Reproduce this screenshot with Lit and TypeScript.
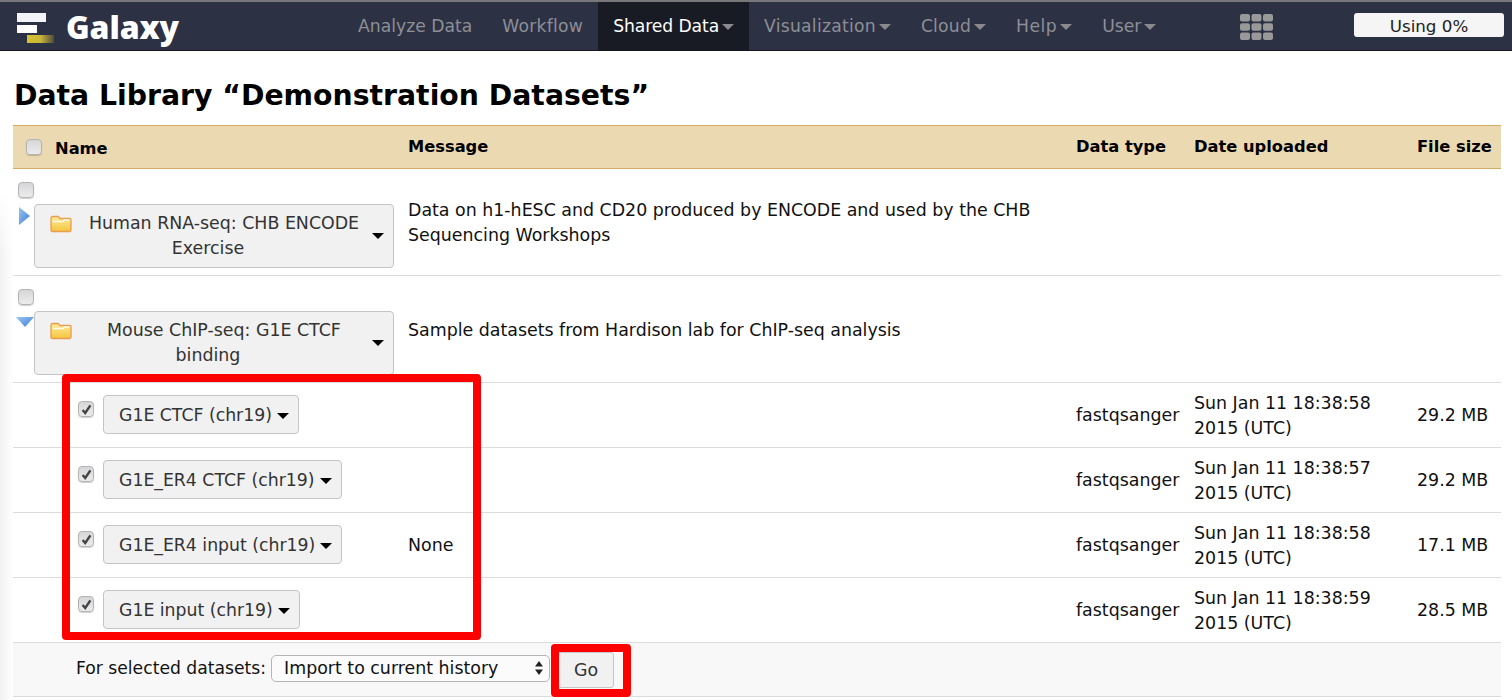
import { LitElement, html, css, svg } from "lit";
import { customElement } from "lit/decorators.js";

type Dataset = {
  name: string;
  message: string;
  time: string;
  size: string;
};

type NavItem = {
  label: string;
  caret: boolean;
  active?: boolean;
  spacing: number;
};

// spacing evens out the width difference against the original UI font
const NAV_ITEMS: NavItem[] = [
  { label: "Analyze Data", caret: false, spacing: 0 },
  { label: "Workflow", caret: false, spacing: 0.25 },
  { label: "Shared Data", caret: true, active: true, spacing: -0.1 },
  { label: "Visualization", caret: true, spacing: 0.25 },
  { label: "Cloud", caret: true, spacing: 0.2 },
  { label: "Help", caret: true, spacing: 0.5 },
  { label: "User", caret: true, spacing: 0 },
];

const DATASETS: Dataset[] = [
  { name: "G1E CTCF (chr19)", message: "", time: "Sun Jan 11 18:38:58", size: "29.2 MB" },
  { name: "G1E_ER4 CTCF (chr19)", message: "", time: "Sun Jan 11 18:38:57", size: "29.2 MB" },
  { name: "G1E_ER4 input (chr19)", message: "None", time: "Sun Jan 11 18:38:58", size: "17.1 MB" },
  { name: "G1E input (chr19)", message: "", time: "Sun Jan 11 18:38:59", size: "28.5 MB" },
];

const folderIcon = svg`<svg class="folder" width="22" height="18" viewBox="0 0 22 18">
  <defs><linearGradient id="fg" x1="0" y1="0" x2="0" y2="1"><stop offset="0" stop-color="#fdeb9c"/><stop offset="1" stop-color="#f5c53e"/></linearGradient></defs>
  <path d="M1 3.500Q1 1.500 3 1.500H8L10 3.500H19.500Q21 3.500 21 5V15Q21 16.500 19.500 16.500H2.500Q1 16.500 1 15Z" fill="url(#fg)" stroke="#e99d50" stroke-width="1.300"/>
  <path d="M2.500 6.500H13L14.500 5H19.500" fill="none" stroke="#fffbe8" stroke-width="1.300"/>
</svg>`;

@customElement("app-root")
export class AppRoot extends LitElement {
  static styles = css`
    :host {
      display: block;
      position: relative;
      width: 1512px;
      height: 700px;
      overflow: hidden;
      background: #fff;
      font-family: "DejaVu Sans", Verdana, sans-serif;
      font-size: 17.4px;
      color: #111;
    }
    .nav {
      height: 48px;
      border-top: 2px solid #77777a;
      border-bottom: 1px solid #14161f;
      background: #2c3143;
      display: flex;
      align-items: stretch;
    }
    .brand {
      width: 343px;
      display: flex;
      align-items: center;
      gap: 11px;
      padding-left: 17px;
      box-sizing: border-box;
    }
    .brand svg {
      margin-top: 4px;
    }
    .brand-text {
      color: #fff;
      font-family: "Open Sans", "DejaVu Sans", sans-serif;
      font-weight: 800;
      font-size: 32px;
      letter-spacing: -0.1px;
    }
    .menu {
      display: flex;
      align-items: stretch;
    }
    .menu-item {
      display: flex;
      align-items: center;
      gap: 3px;
      padding: 0 15px;
      color: #8d8f97;
      font-size: 17.2px;
    }
    .menu-item.active {
      background: #181b24;
      color: #fff;
    }
    .caret-nav {
      width: 0;
      height: 0;
      border-left: 6px solid transparent;
      border-right: 6px solid transparent;
      border-top: 6px solid #8a8a8e;
      margin-top: 2px;
    }
    .grid-icon {
      margin-left: 69px;
      margin-top: 12px;
    }
    .quota {
      position: absolute;
      left: 1354px;
      top: 13px;
      width: 150px;
      height: 24px;
      border-radius: 3px;
      background: #f5f5f5;
      color: #222;
      font-size: 16.7px;
      line-height: 26px;
      text-align: center;
    }
    .edge {
      position: absolute;
      left: 0;
      top: 190px;
      bottom: 0;
      width: 13px;
      background: linear-gradient(to right, #f1f1f1, #ffffff);
      -webkit-mask-image: linear-gradient(transparent, #000 70px);
      mask-image: linear-gradient(transparent, #000 70px);
    }
    h1 {
      margin: 0;
      padding: 24px 0 0 14px;
      height: 50px;
      font-size: 28.3px;
      line-height: 41px;
      font-weight: 700;
      color: #000;
      white-space: nowrap;
    }
    .table {
      position: relative;
      margin: 0 11px 0 13px;
    }
    .row {
      display: grid;
      grid-template-columns: 387px 668px 118px 223px 92px;
      border-bottom: 1px solid #dcdcdc;
      box-sizing: border-box;
    }
    .row > div {
      padding: 0 8px;
      min-width: 0;
      white-space: nowrap;
    }
    .head {
      height: 44px;
      background: #ebd9b2;
      border-top: 1px solid #d8ad63;
      border-bottom: 1px solid #d8ad63;
      font-weight: 700;
      align-items: center;
      color: #000;
      font-size: 16.3px;
      line-height: 24px;
    }
    .head .name-cell {
      display: flex;
      align-items: center;
      gap: 13px;
      padding-left: 13px;
    }
    .head .name-text {
      margin-top: 3px;
    }
    .check {
      width: 16px;
      height: 16px;
      box-sizing: border-box;
      border-radius: 4px;
      background: linear-gradient(#d6d6d8, #ececed);
      border: 1px solid #b3b3b3;
      box-shadow: 0 1px 1px rgba(0, 0, 0, 0.18);
      display: flex;
      align-items: center;
      justify-content: center;
      flex: none;
    }
    .folder-row {
      height: 107px;
    }
    .folder-row .msg {
      padding-top: 29px;
      line-height: 25px;
      white-space: normal;
    }
    .folder-row.r2 .msg {
      padding-top: 42px;
    }
    .folder-cell {
      padding: 13px 0 0 5px !important;
      position: relative;
    }
    .triangle {
      position: absolute;
      left: 3px;
      top: 38px;
    }
    .folder-btn {
      margin: 6px 0 0 16px;
      width: 360px;
      height: 64px;
      box-sizing: border-box;
      display: flex;
      align-items: center;
      padding-left: 15px;
      border: 1px solid #c4c4c4;
      border-radius: 4px;
      background: #f1f1f1;
      color: #333;
      line-height: 25px;
    }
    .folder-btn .folder {
      float: left;
      margin: 4px 10px 0 0;
    }
    .folder-btn .label {
      width: 316px;
      flex: none;
      text-align: center;
      white-space: nowrap;
    }
    .caret {
      width: 0;
      height: 0;
      border-left: 6px solid transparent;
      border-right: 6px solid transparent;
      border-top: 6px solid #000;
      flex: none;
    }
    .folder-btn .caret {
      margin-left: 6px;
    }
    .data-row {
      height: 65px;
      align-items: center;
      line-height: 25px;
    }
    .data-name {
      display: flex;
      align-items: flex-start;
      align-self: start;
      gap: 9px;
      padding: 12px 0 0 65px !important;
    }
    .data-name .check {
      margin-top: 6px;
    }
    .data-btn {
      height: 39px;
      box-sizing: border-box;
      display: flex;
      align-items: center;
      gap: 5px;
      padding: 2px 9px 0 15px;
      border: 1px solid #c4c4c4;
      border-radius: 4px;
      background: #f1f1f1;
      color: #333;
      font-size: 17.3px;
    }
    .date-cell {
      padding-top: 2px !important;
    }
    .footer {
      height: 54px;
      box-sizing: border-box;
      background: #f8f8f8;
      border-bottom: 1px solid #dcdcdc;
      display: flex;
      align-items: center;
      padding-left: 63px;
      gap: 5px;
    }
    .footer-label {
      margin-top: -3px;
      font-size: 17.2px;
    }
    .select {
      width: 279px;
      height: 27px;
      box-sizing: border-box;
      border: 1px solid #b5b5b5;
      border-radius: 5px;
      background: #fbfbfb;
      display: flex;
      align-items: center;
      justify-content: space-between;
      padding: 0 5px 0 12px;
      margin-top: -3px;
    }
    .go {
      width: 56px;
      height: 36px;
      box-sizing: border-box;
      border: 1px solid #c8c8c8;
      border-radius: 3px;
      background: #f1f1f1;
      color: #333;
      display: flex;
      align-items: center;
      justify-content: center;
      margin-left: 3px;
    }
    .mark {
      position: absolute;
      border: 8px solid #fd0000;
      border-radius: 4px;
      box-sizing: border-box;
      pointer-events: none;
    }
    .mark.rows {
      left: 62px;
      top: 374px;
      width: 419px;
      height: 266px;
    }
    .mark.go-mark {
      left: 551px;
      top: 644px;
      width: 80px;
      height: 53px;
    }
  `;

  renderCheck(checked: boolean) {
    return html`<span class="check">
      ${checked
        ? html`<svg width="11" height="11" viewBox="0 0 11 11">
            <path d="M1.600 6L4.200 9L9.400 1.400" fill="none" stroke="#444" stroke-width="2.400" />
          </svg>`
        : ""}
    </span>`;
  }

  renderFolder(label: string[], open: boolean, message: string, cls: string) {
    return html`
      <div class="row folder-row ${cls}">
        <div class="folder-cell">
          ${this.renderCheck(false)}
          <svg class="triangle" width="20" height="20" viewBox="0 0 20 20">
            <defs>
              <linearGradient id="tri" x1="0" y1="0" x2="1" y2="1">
                <stop offset="0" stop-color="#9cc4f2" />
                <stop offset="1" stop-color="#3b7fd6" />
              </linearGradient>
            </defs>
            ${open
              ? svg`<path d="M0 3H18L9 13Z" fill="url(#tri)" />`
              : svg`<path d="M3 0L14 9L3 18Z" fill="url(#tri)" />`}
          </svg>
          <div class="folder-btn">
            <span class="label">${folderIcon}${label[0]}<br />${label[1]}</span>
            <span class="caret"></span>
          </div>
        </div>
        <div class="msg">${message}</div>
        <div></div>
        <div></div>
        <div></div>
      </div>
    `;
  }

  render() {
    return html`
      <div class="nav">
        <div class="brand">
          <svg width="38" height="31" viewBox="0 0 38 31">
            <defs>
              <linearGradient id="gold" x1="0" y1="0" x2="1" y2="0">
                <stop offset="0" stop-color="#d6c233" />
                <stop offset="0.5" stop-color="#c9b638" />
                <stop offset="1" stop-color="#4d4c3c" />
              </linearGradient>
            </defs>
            <rect x="0" y="0" width="29" height="9" fill="#f4f4f6" />
            <rect x="0" y="12" width="20" height="8" fill="#fff" />
            <rect x="10" y="22" width="27" height="8" fill="url(#gold)" />
          </svg>
          <span class="brand-text">Galaxy</span>
        </div>
        <div class="menu">
          ${NAV_ITEMS.map(
            (m) => html`<div
              class="menu-item ${m.active ? "active" : ""}"
              style="letter-spacing: ${m.spacing}px"
            >
              ${m.label}${m.caret ? html`<span class="caret-nav"></span>` : ""}
            </div>`
          )}
        </div>
        <svg class="grid-icon" width="34" height="28" viewBox="0 0 34 28">
          ${[0, 1, 2].map((r) =>
            [0, 1, 2].map(
              (c) =>
                svg`<rect x="${c * 11.5}" y="${r * 9.3}" width="10" height="7.500" rx="2" fill="#999" />`
            )
          )}
        </svg>
      </div>
      <div class="quota">Using 0%</div>
      <div class="edge"></div>
      <h1>Data Library “Demonstration Datasets”</h1>
      <div class="table">
        <div class="row head">
          <div class="name-cell">
            ${this.renderCheck(false)}<span class="name-text">Name</span>
          </div>
          <div>Message</div>
          <div>Data type</div>
          <div>Date uploaded</div>
          <div>File size</div>
        </div>
        ${this.renderFolder(
          ["Human RNA-seq: CHB ENCODE", "Exercise"],
          false,
          "Data on h1-hESC and CD20 produced by ENCODE and used by the CHB Sequencing Workshops",
          "r1"
        )}
        ${this.renderFolder(
          ["Mouse ChIP-seq: G1E CTCF", "binding"],
          true,
          "Sample datasets from Hardison lab for ChIP-seq analysis",
          "r2"
        )}
        ${DATASETS.map(
          (d) => html`
            <div class="row data-row">
              <div class="data-name">
                ${this.renderCheck(true)}
                <div class="data-btn">${d.name}<span class="caret"></span></div>
              </div>
              <div>${d.message}</div>
              <div>fastqsanger</div>
              <div class="date-cell">${d.time}<br />2015 (UTC)</div>
              <div>${d.size}</div>
            </div>
          `
        )}
        <div class="footer">
          <span class="footer-label">For selected datasets:</span>
          <div class="select">
            <span>Import to current history</span>
            <svg width="10" height="16" viewBox="0 0 10 16">
              <path d="M5 1L9 6.500H1ZM5 15L1 9.500H9Z" fill="#222" />
            </svg>
          </div>
          <div class="go">Go</div>
        </div>
      </div>
      <div class="mark rows"></div>
      <div class="mark go-mark"></div>
    `;
  }
}
